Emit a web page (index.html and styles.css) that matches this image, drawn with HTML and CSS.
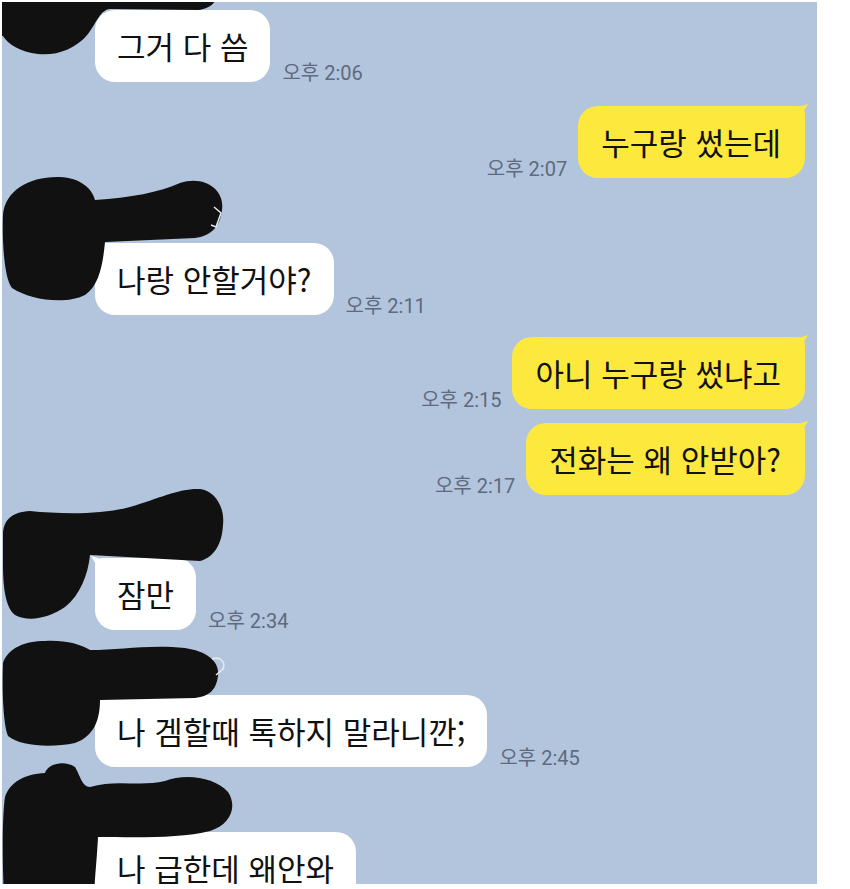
FILE: index.html
```html
<!DOCTYPE html>
<html lang="ko">
<head>
<meta charset="utf-8">
<title>채팅</title>
<link rel="stylesheet" href="styles.css">
</head>
<body>
<div class="chat">

  <div class="group in first-row">
    <svg class="redact redact-a" viewBox="0 0 240 80" aria-hidden="true">
      <path d="M0,0 L216,0 C219,8 211,17 198,18 L110,17 C100,18 97,30 88,42 C75,58 55,64 38,62 C20,60 8,52 3,44 L0,44 Z"/>
    </svg>
    <div class="msg"><p class="bubble">그거 다 씀</p><span class="time">오후 2:06</span></div>
  </div>

  <div class="group out gap-l">
    <div class="msg"><span class="time">오후 2:07</span><p class="bubble tail">누구랑 썼는데</p></div>
  </div>

  <div class="group in gap-l">
    <svg class="redact" viewBox="0 160 240 170" aria-hidden="true">
      <path d="M3,215 C5,190 30,176 60,177 C80,178 92,188 95,200 C130,198 160,192 180,183 C205,175 225,190 222,210 C220,228 210,236 195,238 L105,242 C103,262 100,285 85,295 C65,305 30,300 12,288 C4,278 2,240 3,215 Z"/>
      <path class="loop" d="M214,207 L221,213 L216,227 L211,225"/>
    </svg>
    <div class="sender"></div>
    <div class="msg"><p class="bubble tail">나랑 안할거야?</p><span class="time">오후 2:11</span></div>
  </div>

  <div class="group out gap-l">
    <div class="msg"><span class="time">오후 2:15</span><p class="bubble tail">아니 누구랑 썼냐고</p></div>
  </div>

  <div class="group out gap-s">
    <div class="msg"><span class="time">오후 2:17</span><p class="bubble tail">전화는 왜 안받아?</p></div>
  </div>

  <div class="group in gap-m">
    <svg class="redact" viewBox="0 480 240 170" aria-hidden="true">
      <path d="M3,540 C3,525 12,517 30,516 C60,519 100,520 130,512 C160,503 180,493 200,494 C215,496 225,512 223,530 C222,548 215,562 200,566 L90,560 C88,580 80,600 65,612 C50,622 30,628 15,620 C5,612 3,590 3,570 Z"/>
    </svg>
    <div class="sender"></div>
    <div class="msg"><p class="bubble tail">잠만</p><span class="time">오후 2:34</span></div>
  </div>

  <div class="group in gap-l">
    <svg class="redact" viewBox="0 614 240 170" aria-hidden="true">
      <path d="M3,665 C8,650 25,643 45,643 C65,642 80,646 90,652 C120,652 150,646 185,650 C205,653 220,662 218,678 C216,692 210,698 195,700 L100,702 C100,720 95,738 75,745 C50,750 20,748 8,738 C3,725 2,690 3,665 Z"/>
      <path class="loop" d="M212,661 C220,658 226,664 223,671 L216,677"/>
    </svg>
    <div class="sender"></div>
    <div class="msg"><p class="bubble tail">나 겜할때 톡하지 말라니깐;</p><span class="time">오후 2:45</span></div>
  </div>

  <div class="group in gap-l">
    <svg class="redact" viewBox="0 752 240 170" aria-hidden="true">
      <path d="M5,800 C10,785 25,777 45,776 C48,766 65,763 75,770 C80,778 82,790 90,790 C115,782 140,790 165,784 C185,776 215,780 228,795 C238,810 230,828 210,834 C180,842 130,840 98,840 C97,860 95,880 92,922 L5,922 C2,870 2,820 5,800 Z"/>
    </svg>
    <div class="sender"></div>
    <div class="msg"><p class="bubble tail">나 급한데 왜안와</p></div>
  </div>

</div>
</body>
</html>
```
FILE: styles.css
```css
html, body {
  margin: 0;
  padding: 0;
  background: #ffffff;
}

body {
  font-family: "Noto Sans CJK KR", "Noto Sans", sans-serif;
}

.chat {
  margin: 2px 33px 0 2px;
  height: 882px;
  background: #b3c5dc;
  overflow: hidden;
  position: relative;
}

.group {
  position: relative;
}

.group.in {
  padding-left: 93px;
}

.group.out {
  padding-right: 12px;
}

.first-row {
  padding-top: 8px;
}

.gap-l {
  margin-top: 22px;
}

.gap-m {
  margin-top: 20px;
}

.gap-s {
  margin-top: 14px;
}

.out.gap-l:nth-child(2) {
  margin-top: 24px;
}

.sender {
  height: 43px;
}

.msg {
  display: flex;
  align-items: flex-end;
  gap: 12px;
}

.out .msg {
  justify-content: flex-end;
  gap: 11px;
}

.bubble {
  margin: 0;
  padding: 16px 22px;
  font-size: 31px;
  line-height: 40px;
  color: #111111;
  background: #ffffff;
  border-radius: 20px;
  position: relative;
  white-space: nowrap;
}

.out .bubble {
  background: #fde93e;
  padding: 16px 24px 16px 23px;
}

.bubble.tail::after {
  content: "";
  position: absolute;
  top: -2px;
  width: 14px;
  height: 14px;
  background: inherit;
}

.out .bubble.tail {
  border-top-right-radius: 8px;
}

.out .bubble.tail::after {
  right: -3px;
  clip-path: polygon(0 30%, 100% 0, 40% 100%);
}

.in .bubble.tail {
  border-top-left-radius: 8px;
}

.in .bubble.tail::after {
  left: -4px;
  clip-path: polygon(100% 30%, 0 0, 60% 100%);
}

.time {
  font-family: Roboto, "Noto Sans CJK KR", sans-serif;
  font-size: 20px;
  line-height: 22px;
  margin-bottom: -2px;
  color: #5d6a7f;
  white-space: nowrap;
}

.redact {
  position: absolute;
  left: -2px;
  top: -40px;
  width: 240px;
  height: 170px;
  z-index: 2;
}

.redact-a {
  top: -10px;
  height: 80px;
}

.redact path {
  fill: #111111;
}

.redact path.loop {
  fill: none;
  stroke: #e4e9f0;
  stroke-width: 1.5;
}
```
